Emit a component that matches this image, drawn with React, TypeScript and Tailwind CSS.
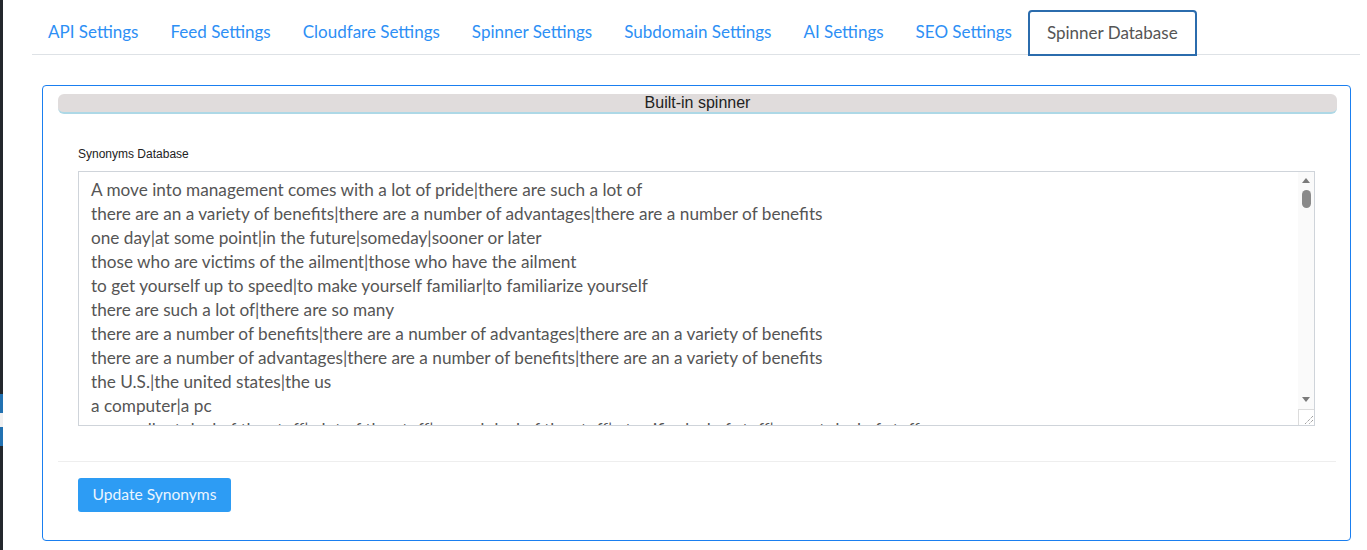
const tabs = [
  'API Settings',
  'Feed Settings',
  'Cloudfare Settings',
  'Spinner Settings',
  'Subdomain Settings',
  'AI Settings',
  'SEO Settings',
];

const synonyms = [
  'A move into management comes with a lot of pride|there are such a lot of',
  'there are an a variety of benefits|there are a number of advantages|there are a number of benefits',
  'one day|at some point|in the future|someday|sooner or later',
  'those who are victims of the ailment|those who have the ailment',
  'to get yourself up to speed|to make yourself familiar|to familiarize yourself',
  'there are such a lot of|there are so many',
  'there are a number of benefits|there are a number of advantages|there are an a variety of benefits',
  'there are a number of advantages|there are a number of benefits|there are an a variety of benefits',
  'the U.S.|the united states|the us',
  'a computer|a pc',
  'an excellent deal of the stuff|a lot of the stuff|a good deal of the stuff|a terrific deal of stuff|a great deal of stuff',
  'in the event that|if|when',
  'to be able to|in order to|so as to',
].join('\n');

const arial = { fontFamily: '"Liberation Sans", Arial, sans-serif' };

const App = () => {
  return (
    <div className="flex h-[550px] bg-white" style={{ fontFamily: 'Lato, sans-serif' }}>
      {/* admin sidebar edge */}
      <div className="flex w-[3px] flex-col bg-[#23282d]">
        <div className="h-[394px]" />
        <div className="h-[19px] bg-[#2271b1]" />
        <div className="h-[14px] bg-[#f0f0f1]" />
        <div className="h-[19px] bg-[#2271b1]" />
      </div>

      <div className="ml-[29px] mr-[7px] flex-1">
        <ul className="mt-[10px] flex border-b border-[#dee2e6]">
          {tabs.map((t) => (
            <li key={t} className="flex h-[44px] items-center px-[16px] text-[17px] text-[#2d8ff5]">
              {t}
            </li>
          ))}
          <li className="-mb-[2px] flex h-[46px] items-center rounded-t-[4px] border-2 border-[#2b6cad] px-[17px] text-[17px] text-[#555]">
            Spinner Database
          </li>
        </ul>

        <section className="ml-[10px] mr-[9px] mt-[30px] rounded-[4px] border border-[#1a7ff0] pb-[28px]">
          <div className="ml-[15px] mr-[13px] mt-[8px] flex h-[20px] items-center justify-center rounded-[6px] border-b-2 border-[#add8e6] bg-[#e0dcdc] text-[16px] text-[#222]" style={arial}>
            Built-in spinner
          </div>

          <div className="px-[35px] pt-[31px]">
            <label className="block text-[12px] leading-[18px] text-[#222]" style={arial}>
              Synonyms Database
            </label>
            <div className="relative mt-[8px]">
              <textarea
                defaultValue={synonyms}
                className="block h-[255px] w-full resize-none overflow-hidden border border-[#cfd4da] pl-[12px] pr-[28px] pt-[6px] text-[17.2px] leading-[24px] text-[#555] outline-none"
                style={{ fontFamily: 'Lato, sans-serif' }}
              />
              {/* scrollbar */}
              <div className="absolute bottom-[1px] right-[1px] top-[1px] flex w-[16px] flex-col items-center bg-[#fafafa]">
                <div className="mt-[6px] h-0 w-0 border-x-[4px] border-b-[5px] border-x-transparent border-b-[#7a7a7a]" />
                <div className="mt-[7px] h-[18px] w-[9px] rounded-full bg-[#8a8a8a]" />
                <div className="flex-1" />
                <div className="mb-[7px] h-0 w-0 border-x-[4px] border-t-[5px] border-x-transparent border-t-[#7a7a7a]" />
                <div className="flex h-[16px] w-[16px] items-end justify-end border-l border-t border-[#dcdcdc] bg-white">
                  <svg width="12" height="12" viewBox="0 0 12 12">
                    <path d="M11 3 L3 11 M11 7 L7 11" stroke="#777" strokeWidth="1" strokeDasharray="1 1" />
                  </svg>
                </div>
              </div>
            </div>
          </div>

          <div className="ml-[15px] mr-[14px] mt-[35px] border-t border-[#eeeeee]" />

          <div className="px-[35px] pt-[16px]">
            <button className="h-[34px] w-[153px] rounded-[3px] bg-[#2d9cf4] text-[15.6px] text-[#eaf5ff]">
              Update Synonyms
            </button>
          </div>
        </section>
      </div>
    </div>
  );
};

export default App;
